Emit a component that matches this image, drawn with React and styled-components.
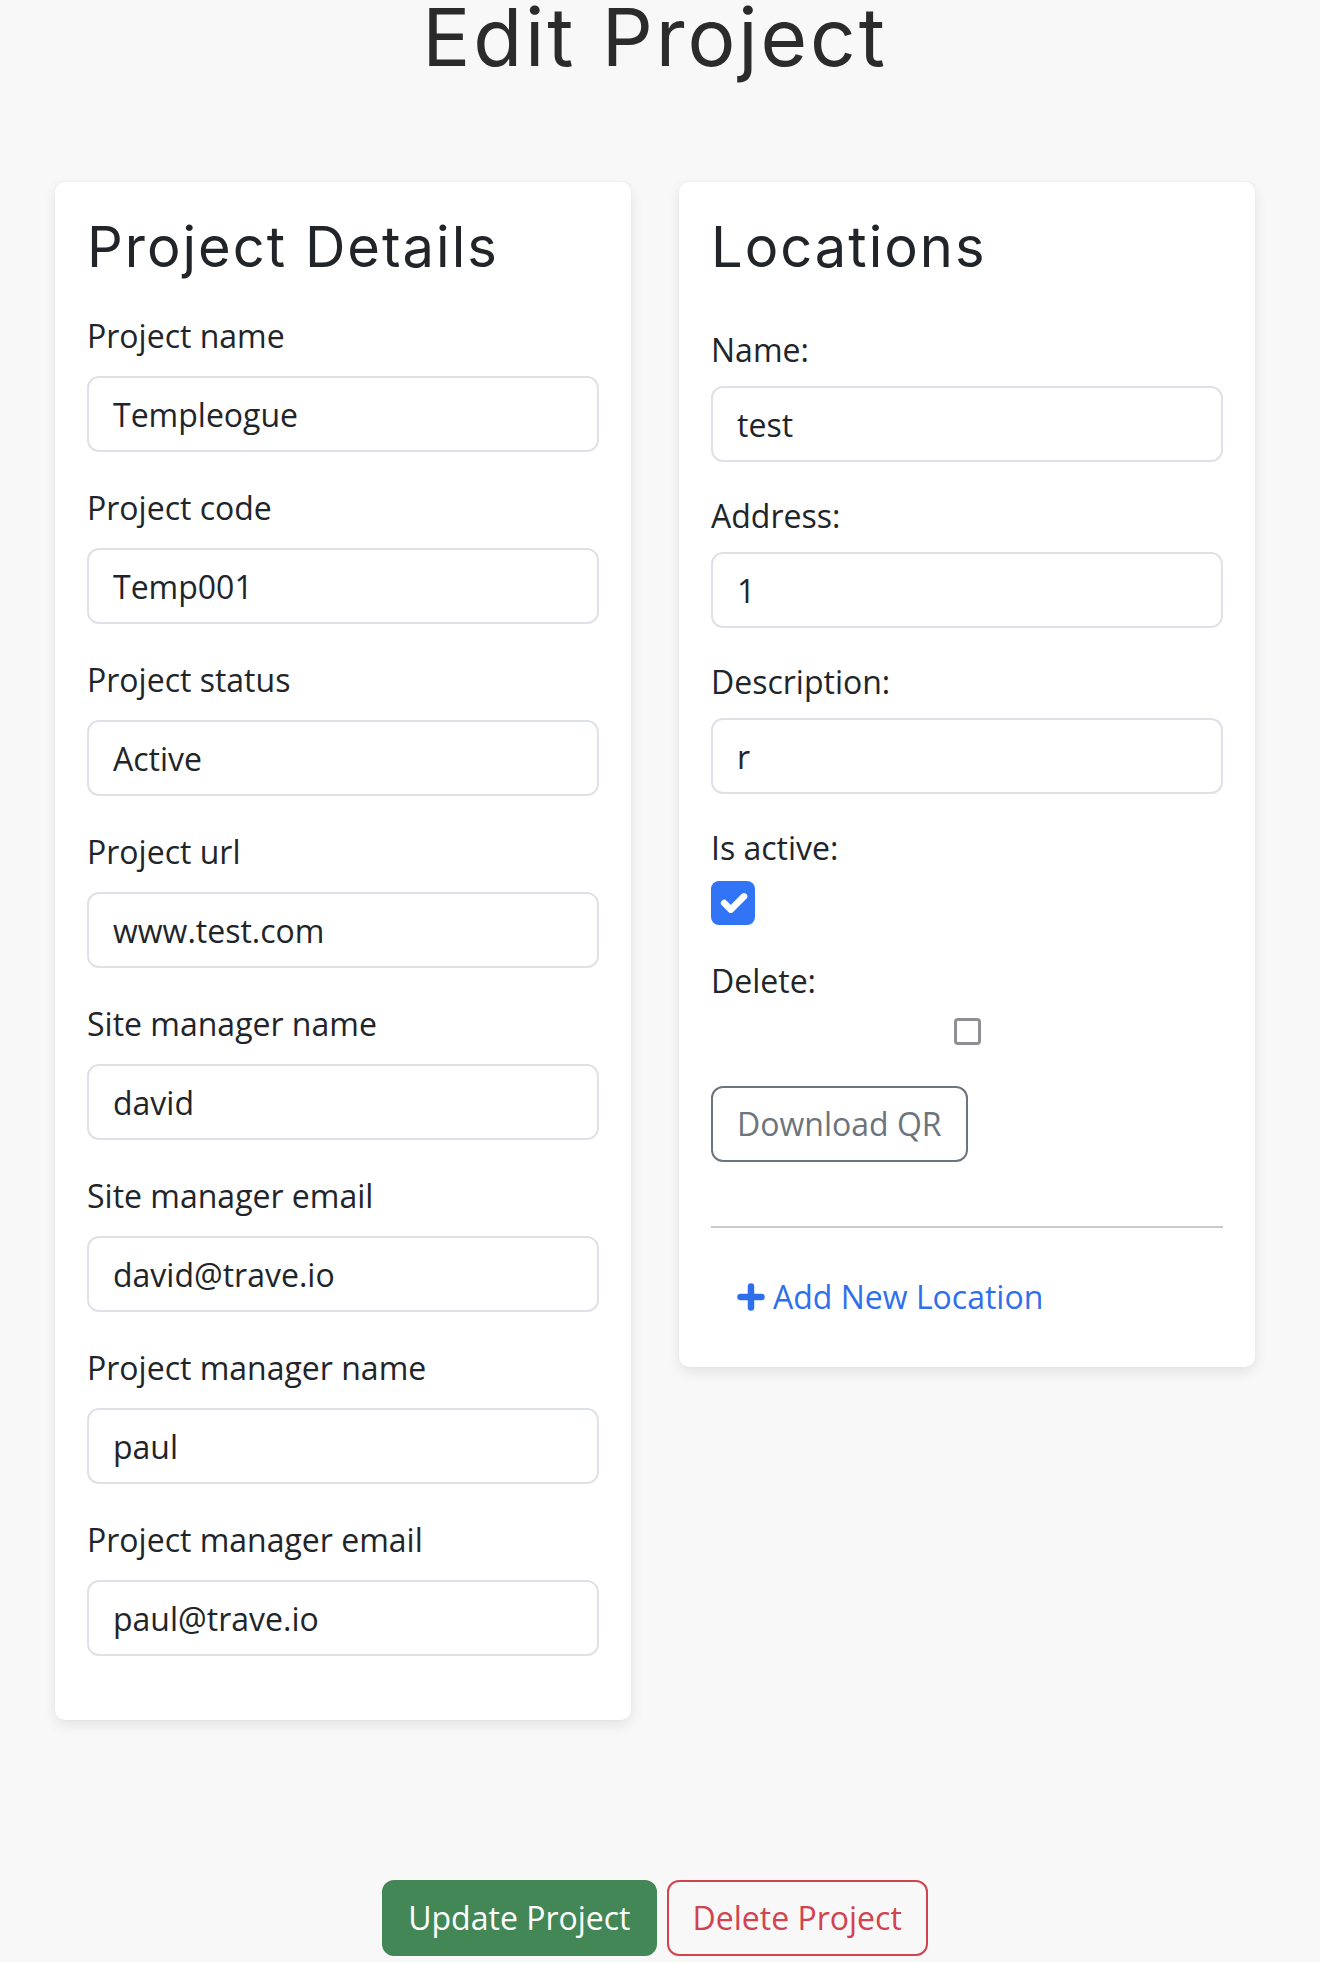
import React from "react";
import styled, { createGlobalStyle } from "styled-components";

const GlobalStyle = createGlobalStyle`
  html, body {
    margin: 0;
    padding: 0;
    background: #f8f8f8;
  }
  body {
    font-family: "Open Sans", "Noto Sans", sans-serif;
    color: #212529;
  }
  * { box-sizing: border-box; }
`;

const Page = styled.div`
  width: 1310px;
  display: flex;
  flex-direction: column;
  align-items: center;
`;

const Title = styled.h1`
  margin: 0;
  font-family: "Inter", sans-serif;
  font-weight: 400;
  font-size: 80px;
  line-height: 74px;
  letter-spacing: 0.036em;
  color: #2b2b2b;
`;

const Columns = styled.div`
  margin-top: 108px;
  display: grid;
  grid-template-columns: 576px 576px;
  gap: 48px;
  align-items: start;
`;

const Card = styled.section`
  background: #ffffff;
  border-radius: 10px;
  padding: 32px;
  box-shadow: 0 5px 14px rgba(0, 0, 0, 0.09), 0 0 3px rgba(0, 0, 0, 0.03);
  display: flex;
  flex-direction: column;
`;

const CardTitle = styled.h2`
  margin: 0 0 ${(p) => p.$gap}px;
  font-family: "Inter", sans-serif;
  font-weight: 400;
  font-size: 56px;
  line-height: 67px;
  letter-spacing: 0.036em;
  color: #212529;
`;

const Field = styled.div`
  display: flex;
  flex-direction: column;
  margin-bottom: ${(p) => p.$after}px;
`;

const Label = styled.label`
  display: block;
  font-size: 32px;
  line-height: 48px;
  color: #212529;
  margin-bottom: ${(p) => p.$gap}px;
`;

const Input = styled.input`
  display: block;
  width: 100%;
  height: 76px;
  padding: 12px 24px;
  font-family: "Open Sans", "Noto Sans", sans-serif;
  font-size: 32px;
  line-height: 48px;
  color: #212529;
  background: #ffffff;
  border: 2px solid #dee2e6;
  border-radius: 12px;
  outline: none;
`;

const BlueCheck = styled.span`
  width: 44px;
  height: 44px;
  border-radius: 8px;
  background: #3175f6;
  display: flex;
  align-items: center;
  justify-content: center;
`;

const CheckRow = styled.div`
  display: flex;
  justify-content: ${(p) => (p.$center ? "center" : "flex-start")};
  margin-bottom: ${(p) => p.$after}px;
`;

const PlainCheck = styled.span`
  width: 27px;
  height: 27px;
  border: 3px solid #8e8e93;
  border-radius: 4px;
  background: #ffffff;
`;

const OutlineButton = styled.button`
  align-self: flex-start;
  font-family: "Open Sans", "Noto Sans", sans-serif;
  font-size: 32px;
  line-height: 48px;
  padding: 12px 24px;
  border-radius: 12px;
  background: transparent;
  border: 2px solid ${(p) => p.$color};
  color: ${(p) => p.$color};
`;

const SolidButton = styled.button`
  font-family: "Open Sans", "Noto Sans", sans-serif;
  font-size: 32px;
  line-height: 48px;
  padding: 12px 24px;
  border-radius: 12px;
  background: ${(p) => p.$color};
  border: 2px solid ${(p) => p.$color};
  color: #ffffff;
`;

const Divider = styled.hr`
  width: 100%;
  margin: 64px 0 31px;
  border: 0;
  height: 2px;
  background: #c9c9c9;
`;

const LinkButton = styled.button`
  align-self: flex-start;
  display: inline-flex;
  align-items: center;
  gap: 8px;
  font-family: "Open Sans", "Noto Sans", sans-serif;
  font-size: 32px;
  line-height: 48px;
  padding: 12px 24px;
  border: 2px solid transparent;
  background: transparent;
  color: #2f6fec;
`;

const Actions = styled.div`
  margin-top: 160px;
  display: flex;
  gap: 10px;
`;

const projectFields = [
  ["Project name", "Templeogue"],
  ["Project code", "Temp001"],
  ["Project status", "Active"],
  ["Project url", "www.test.com"],
  ["Site manager name", "david"],
  ["Site manager email", "david@trave.io"],
  ["Project manager name", "paul"],
  ["Project manager email", "paul@trave.io"],
];

const locationFields = [
  ["Name:", "test"],
  ["Address:", "1"],
  ["Description:", "r"],
];

const CheckIcon = () => (
  <svg width="44" height="44" viewBox="0 0 20 20" fill="none">
    <path
      d="m6 10 3 3 6-6"
      stroke="#ffffff"
      strokeWidth="3"
      strokeLinecap="round"
      strokeLinejoin="round"
    />
  </svg>
);

const PlusIcon = () => (
  <svg width="28" height="28" viewBox="0 0 28 28" fill="none">
    <path
      d="M3.5 14h21M14 3.5v21"
      stroke="#2f6fec"
      strokeWidth="6.5"
      strokeLinecap="round"
    />
  </svg>
);

export default function App() {
  return (
    <>
      <GlobalStyle />
      <Page>
        <Title>Edit Project</Title>
        <Columns>
          <Card>
            <CardTitle $gap={31}>Project Details</CardTitle>
            {projectFields.map(([label, value]) => (
              <Field key={label} $after={32}>
                <Label $gap={16}>{label}</Label>
                <Input readOnly defaultValue={value} />
              </Field>
            ))}
          </Card>
          <Card>
            <CardTitle $gap={45}>Locations</CardTitle>
            {locationFields.map(([label, value]) => (
              <Field key={label} $after={30}>
                <Label $gap={12}>{label}</Label>
                <Input readOnly defaultValue={value} />
              </Field>
            ))}
            <Label $gap={9}>Is active:</Label>
            <CheckRow $after={32}>
              <BlueCheck>
                <CheckIcon />
              </BlueCheck>
            </CheckRow>
            <Label $gap={13}>Delete:</Label>
            <CheckRow $center $after={41}>
              <PlainCheck />
            </CheckRow>
            <OutlineButton $color="#6c757d">Download QR</OutlineButton>
            <Divider />
            <LinkButton>
              <PlusIcon />
              Add New Location
            </LinkButton>
          </Card>
        </Columns>
        <Actions>
          <SolidButton $color="#438757">Update Project</SolidButton>
          <OutlineButton $color="#d1434f">Delete Project</OutlineButton>
        </Actions>
      </Page>
    </>
  );
}
